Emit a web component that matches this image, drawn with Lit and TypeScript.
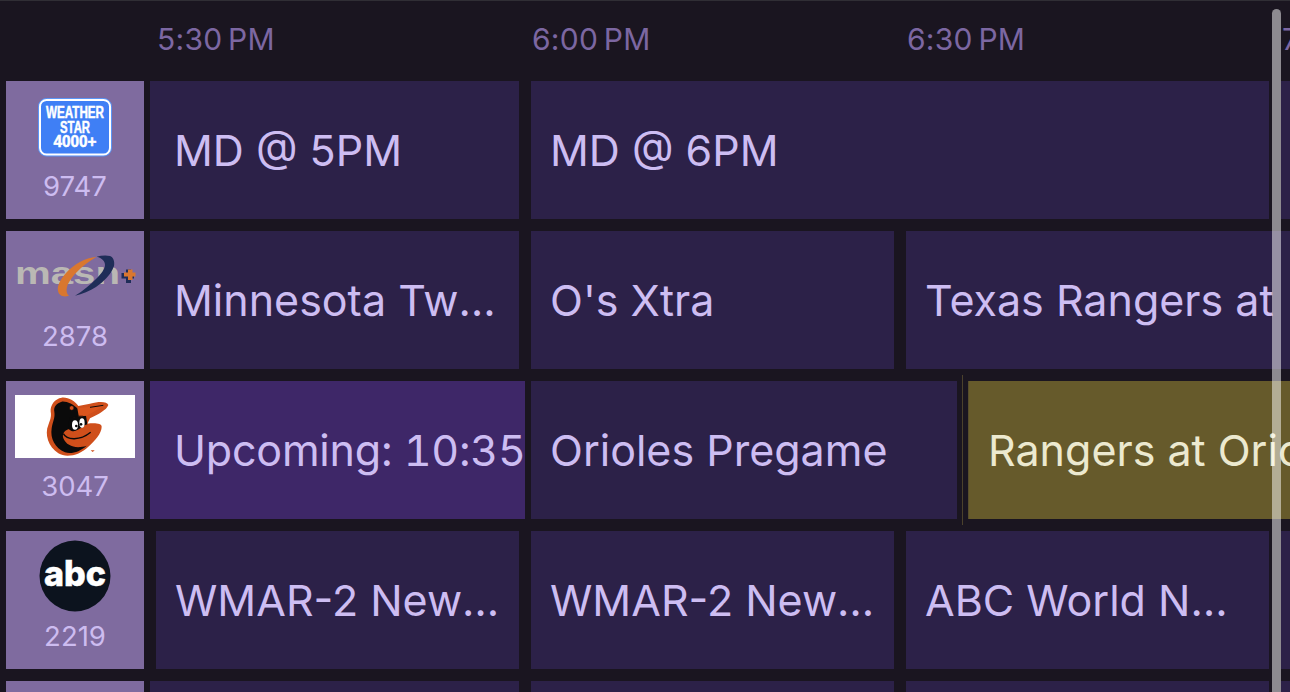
import { LitElement, html, css, svg } from "lit";
import { customElement } from "lit/decorators.js";

type Cell = { text?: string; ml: number; w: number; pad?: number; pr?: number; kind?: string; now?: boolean };
type Row = { num: string; logo: unknown; cells: Cell[] };

const weather = svg`
  <rect x="32.5" y="17.5" width="73" height="57.5" rx="8" fill="#3f7ff5" stroke="#5b96f7" stroke-width="1"/>
  <rect x="34" y="19" width="70" height="54.5" rx="6.5" fill="#3f7ff5" stroke="#fff" stroke-width="2"/>
  <g class="ws">
    <text x="69" y="37" text-anchor="middle" textLength="58" lengthAdjust="spacingAndGlyphs">WEATHER</text>
    <text x="69" y="52" text-anchor="middle" textLength="30" lengthAdjust="spacingAndGlyphs">STAR</text>
    <text x="69" y="66" text-anchor="middle" textLength="43" lengthAdjust="spacingAndGlyphs">4000+</text>
  </g>`;

const masn = svg`
  <text class="masn" x="9" y="53" textLength="105" lengthAdjust="spacingAndGlyphs">masn</text>
  <path d="M104 25C107 26 109 30 108 35C105 44 97 51 90 56C84 60 76 63 69 64.700C77 60 84 54 90 48C95 43 99 38 99 34C99 30 96 27 90.700 25.700C95 24.500 100 24 104 25Z" fill="#1f2d58"/>
  <path d="M90.700 25.700C79 27 68 33 60 42C54 49 51 55 52 60C53 65 58 66.500 63 64.700C60 62 60 58 62 53C66 45 75 35 90.700 25.700Z" fill="#d9772f"/>
  <path d="M115.500 42h4.500v-3.500h5v3.500h3v5.500h-3v4.500h-5v-4.500h-4.500Z" fill="#1f2d58"/>
  <path d="M118 41.500h4v-3h4.500v3h3v4h-3v3.500h-4.500v-3.500h-4Z" fill="#d9772f"/>`;

const orioles = svg`
  <rect x="9" y="14" width="120" height="63" fill="#fff"/>
  <g transform="translate(-6 -6) scale(.33333)">
    <path d="M185 68C165 71 150 90 152 110C155 125 150 135 145 150C133 178 145 215 175 235C200 250 240 240 265 215C285 197 305 175 305 155C305 145 285 143 262 146L270 130C295 118 320 105 325 90C322 80 300 78 270 86L235 93C225 78 205 66 185 68Z" fill="#cf4f1b"/>
    <path d="M185 80C170 85 160 95 163 110C166 128 158 140 155 160C150 190 165 220 195 232C215 238 240 230 260 212C230 222 200 215 190 190C185 175 195 165 208 162L215 130L250 122L232 100C220 88 200 78 185 80Z" fill="#0a0a0a"/>
    <path d="M208 128L258 122L262 148C250 150 245 162 225 168C215 170 205 165 205 155Z" fill="#0a0a0a"/>
    <path d="M190 176C200 196 240 198 272 172" fill="none" stroke="#0a0a0a" stroke-width="4"/>
    <path d="M232 100L270 95L312 88C310 95 285 110 258 122L236 122Z" fill="#d9551d"/>
    <path d="M270 97L310 91" fill="none" stroke="#0a0a0a" stroke-width="3"/>
    <ellipse cx="225" cy="150" rx="9" ry="14" fill="#fff"/>
    <ellipse cx="246" cy="144" rx="8" ry="14" fill="#fff"/>
    <circle cx="229" cy="153" r="4" fill="#0a0a0a"/>
    <circle cx="243" cy="148" r="4" fill="#0a0a0a"/>
    <circle cx="215" cy="99" r="7" fill="#cf4f1b" stroke="#0a0a0a" stroke-width="2"/>
    <path d="M272 226h12l-6 5Z" fill="#cf4f1b"/>
  </g>`;

const abc = svg`
  <circle cx="69" cy="45" r="35.500" fill="#0c131e"/>
  <text class="abc" x="69" y="55" text-anchor="middle" textLength="62" lengthAdjust="spacingAndGlyphs">abc</text>`;

const rows: Row[] = [
  {
    num: "9747", logo: weather,
    cells: [
      { text: "MD @ 5PM", ml: 6, w: 369, pad: 24 },
      { text: "MD @ 6PM", ml: 12, w: 738 },
      { ml: 12, w: 400 },
    ],
  },
  {
    num: "2878", logo: masn,
    cells: [
      { text: "Minnesota Twins at Baltimore Orioles", ml: 6, w: 369, pad: 24 },
      { text: "O's Xtra", ml: 12, w: 363 },
      { text: "Texas Rangers at", ml: 12, w: 900, kind: "clip" },
    ],
  },
  {
    num: "3047", logo: orioles,
    cells: [
      { text: "Upcoming: 10:35", ml: 6, w: 375, pad: 24, kind: "active" },
      { text: "Orioles Pregame", ml: 6, w: 426 },
      { text: "Rangers at Orioles", ml: 11, w: 900, kind: "live", now: true },
    ],
  },
  {
    num: "2219", logo: abc,
    cells: [
      { text: "WMAR-2 News at 5PM", ml: 12, w: 363, pr: 14 },
      { text: "WMAR-2 News at 6PM", ml: 12, w: 363, pr: 14 },
      { text: "ABC World News Tonight", ml: 12, w: 363 },
      { ml: 12, w: 400 },
    ],
  },
  {
    num: "", logo: null,
    cells: [
      { ml: 6, w: 369 },
      { ml: 12, w: 363 },
      { ml: 12, w: 363 },
      { ml: 12, w: 400 },
    ],
  },
];

@customElement("app-root")
export class AppRoot extends LitElement {
  static styles = css`
    :host {
      display: block;
      width: 1290px;
      height: 692px;
      overflow: hidden;
      position: relative;
      background: #1a1520;
      font-family: Inter, "Liberation Sans", sans-serif;
    }
    .top {
      height: 1px;
      background: #302e35;
    }
    .header {
      display: flex;
      height: 80px;
      padding-left: 157px;
      align-items: center;
      padding-bottom: 4px;
      box-sizing: border-box;
    }
    .time {
      flex: 0 0 375px;
      font-size: 30px;
      letter-spacing: 0.25px;
      color: #7c67a2;
      white-space: nowrap;
    }
    .rows {
      display: flex;
      flex-direction: column;
      gap: 12px;
      padding-left: 6px;
    }
    .row {
      display: flex;
      height: 138px;
      flex: none;
    }
    .channel {
      flex: 0 0 138px;
      background: #7f6b9f;
      display: flex;
      flex-direction: column;
      align-items: center;
    }
    .channel svg {
      display: block;
      flex: none;
    }
    .num {
      height: 36px;
      line-height: 35px;
      font-size: 27.5px;
      color: #cdbcf0;
    }
    .cell {
      position: relative;
      flex: none;
      box-sizing: border-box;
      height: 138px;
      background: #2c2148;
      color: #cdbdf2;
      font-size: 43px;
    }
    .label {
      display: block;
      line-height: 138px;
      height: 138px;
      white-space: nowrap;
      overflow: hidden;
      text-overflow: ellipsis;
    }
    .cell.clip .label,
    .cell.active .label,
    .cell.live .label {
      overflow: visible;
      text-overflow: clip;
    }
    .cell.active {
      background: #3e2768;
      font-variant-numeric: tabular-nums;
      letter-spacing: -0.2px;
    }
    .cell.live {
      background: #665a2b;
      color: #ece9cf;
      border-left: 1px solid #564c2d;
    }
    .now {
      position: absolute;
      left: -7px;
      top: -6px;
      bottom: -6px;
      width: 1px;
      background: #4b412c;
    }
    .ws text {
      font-family: "Liberation Sans", sans-serif;
      font-weight: 700;
      font-size: 16px;
      fill: #fff;
      stroke: #fff;
      stroke-width: 0.5px;
    }
    .masn {
      font-family: "Liberation Sans", sans-serif;
      font-weight: 700;
      font-size: 31px;
      fill: #bab8b4;
    }
    .abc {
      font-family: Inter, sans-serif;
      font-weight: 800;
      font-size: 35px;
      fill: #fff;
      stroke: #fff;
      stroke-width: 0.5px;
    }
    .scrollbar {
      position: absolute;
      left: 1272px;
      top: 9px;
      bottom: -10px;
      width: 9px;
      border-radius: 5px;
      background: rgba(255, 255, 255, 0.5);
    }
  `;

  render() {
    return html`
      <div class="top"></div>
      <div class="header">
        ${["5:30\u202fPM", "6:00\u202fPM", "6:30\u202fPM", "7:00\u202fPM"].map(
          (t) => html`<div class="time">${t}</div>`
        )}
      </div>
      <div class="rows">
        ${rows.map(
          (r) => html`
            <div class="row">
              <div class="channel">
                <svg width="138" height="88" viewBox="0 0 138 88">${r.logo}</svg>
                <div class="num">${r.num}</div>
              </div>
              ${r.cells.map(
                (c) => html`
                  <div
                    class="cell ${c.kind ?? ""}"
                    style="margin-left:${c.ml}px;width:${c.w}px;padding-left:${c.pad ?? 19}px;padding-right:${c.pr ?? 20}px"
                  >
                    ${c.now ? html`<div class="now"></div>` : ""}
                    <span class="label">${c.text ?? ""}</span>
                  </div>
                `
              )}
            </div>
          `
        )}
      </div>
      <div class="scrollbar"></div>
    `;
  }
}
